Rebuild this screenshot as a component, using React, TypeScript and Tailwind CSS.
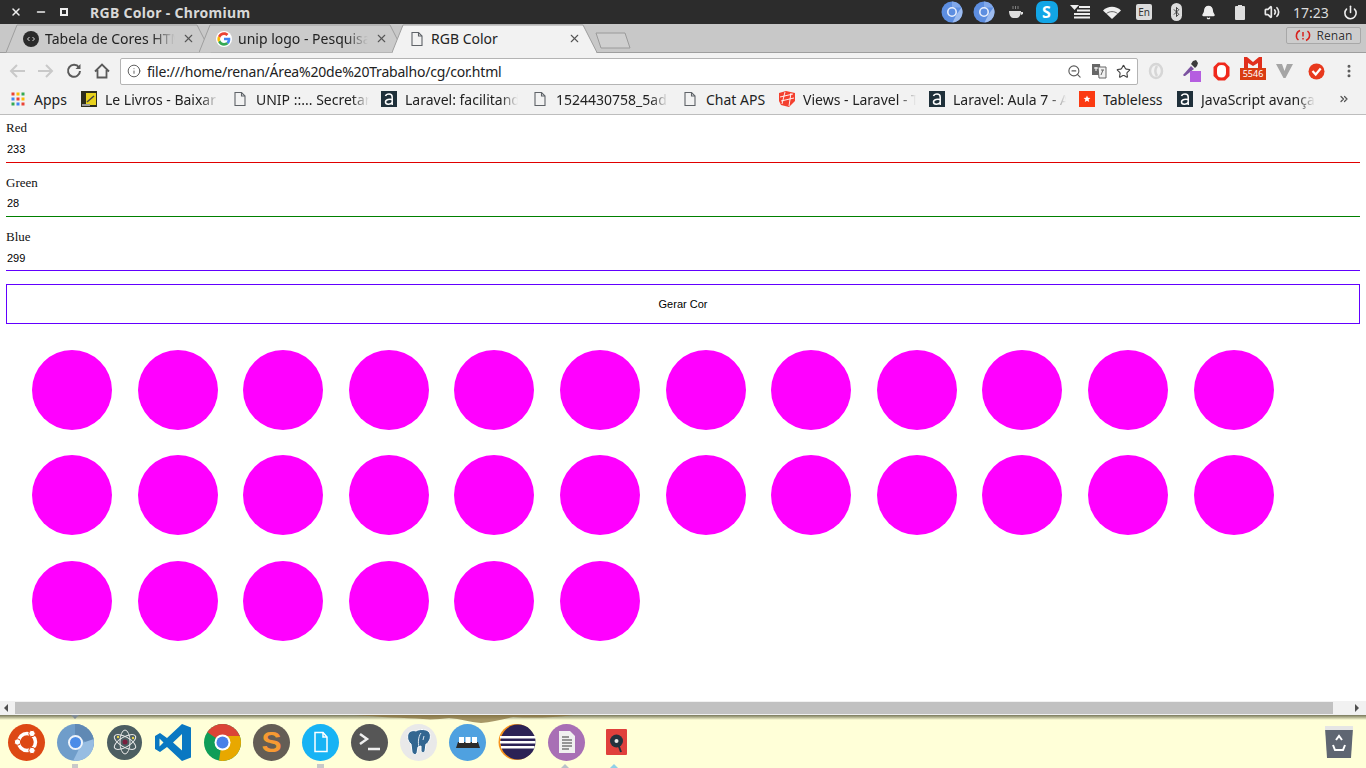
import React from 'react';
import { X, Minus, Bell, Volume2, Power, Bluetooth, Info, ZoomOut, Star, EllipsisVertical, ChevronsRight } from 'lucide-react';

const uiFont = 'font-["Noto_Sans",sans-serif]';

function DocIcon({ size = 16 }: { size?: number }) {
  return (
    <svg width={size} height={size} viewBox="0 0 16 16" fill="none" stroke="#5f6368" strokeWidth="1.1">
      <path d="M3 1.500h6.500L13 5v9.500H3z" />
      <path d="M9.500 1.500V5H13" />
    </svg>
  );
}

function GoogleIcon() {
  return (
    <svg width="16" height="16" viewBox="0 0 48 48">
      <circle cx="24" cy="24" r="24" fill="#fff" />
      <path fill="#4285F4" d="M43 24.500c0-1.400-.1-2.700-.4-4H24v7.600h10.800c-.5 2.500-1.900 4.600-4 6l6.400 5c3.700-3.500 5.800-8.600 5.800-14.600z" />
      <path fill="#34A853" d="M24 44c5.400 0 9.900-1.800 13.200-4.900l-6.400-5c-1.800 1.200-4.100 1.900-6.800 1.900-5.200 0-9.600-3.500-11.200-8.200l-6.600 5.100C9.500 39.500 16.200 44 24 44z" />
      <path fill="#FBBC05" d="M12.800 27.800c-.8-2.500-.8-5.100 0-7.600l-6.600-5.100c-2.800 5.600-2.800 12.200 0 17.800z" />
      <path fill="#EA4335" d="M24 12c2.900 0 5.500 1 7.600 3l5.700-5.700C33.900 6 29.400 4 24 4 16.200 4 9.500 8.500 6.200 15.100l6.600 5.100C14.400 15.500 18.800 12 24 12z" />
    </svg>
  );
}

function CodeFavicon() {
  return (
    <svg width="16" height="16" viewBox="0 0 16 16">
      <circle cx="8" cy="8" r="8" fill="#2b2b2b" />
      <path d="M6.500 6 4.500 8l2 2M9.500 6l2 2-2 2" fill="none" stroke="#ddd" strokeWidth="1" />
    </svg>
  );
}

function TabShape({ active }: { active: boolean }) {
  const fill = active ? '#f2f2f2' : '#cbcbcb';
  return (
    <svg className="absolute left-0 top-0" width="205" height="29" viewBox="0 0 205 29">
      <path d="M0 28.500 11 1h180l14 27.500" fill={fill} stroke="#9e9e9e" strokeWidth="1" />
      {active && <rect x="1" y="27.500" width="203" height="2" fill="#f2f2f2" />}
    </svg>
  );
}

function Tab({ icon, title, active }: { icon: React.ReactNode; title: string; active?: boolean }) {
  return (
    <div className={`relative flex h-[29px] w-[205px] shrink-0 items-center pl-[17px] ${active ? 'z-10' : ''} [&:not(:first-child)]:-ml-3`}>
      <TabShape active={!!active} />
      <div className="relative flex w-[16px] justify-center">{icon}</div>
      <div className={`relative ml-[6px] w-[134px] overflow-hidden whitespace-nowrap text-[14px] text-[#222] ${active ? '' : '[mask-image:linear-gradient(to_right,black_80%,transparent_97%)]'}`}>
        {title}
      </div>
      <X size={13} strokeWidth={2} className="relative ml-[3px] text-[#555]" />
    </div>
  );
}

function ABadge() {
  return (
    <div className="flex h-4 w-4 items-center justify-center bg-[#1f303a]">
      <svg width="10" height="13" viewBox="0 0 10 13" fill="none" stroke="#fff" strokeWidth="1.500">
        <path d="M1.500 3C2 1.500 3.500 1 5 1c2 0 3.200 1 3.200 3v8" />
        <path d="M8.200 6.500C6 6 1.500 6 1.500 9c0 2.800 5 3 6.700 .5" />
      </svg>
    </div>
  );
}

const AppsIcon = () => (
  <svg width="16" height="16" viewBox="0 0 16 16">
    {['#ea4335', '#fbbc05', '#34a853', '#4285f4', '#ea4335', '#fbbc05', '#34a853', '#4285f4', '#ea4335'].map((c, i) => (
      <rect key={i} x={1.500 + (i % 3) * 5} y={1.500 + Math.floor(i / 3) * 5} width="3" height="3" fill={c} />
    ))}
  </svg>
);

const LivrosIcon = () => (
  <svg width="16" height="16" viewBox="0 0 16 16">
    <rect width="16" height="16" fill="#2d2d1c" />
    <rect x="5" y="2" width="10" height="12" fill="#e8d21d" />
    <path d="M6 11l7-6" stroke="#444" strokeWidth="1.500" />
    <rect x="1" y="13" width="8" height="2" fill="#999" />
  </svg>
);

const LaravelIcon = () => (
  <svg width="16" height="16" viewBox="0 0 16 16">
    <path d="M0 2l7-2 9 2v8l-6 6-8-2-2-4z" fill="#f4402f" />
    <path d="M1 6l13-3M3 13 6 1M10 15l2-13M2 10l13-3" stroke="#fff" strokeWidth=".9" fill="none" />
  </svg>
);

const TablelessIcon = () => (
  <svg width="16" height="16" viewBox="0 0 16 16">
    <rect width="16" height="16" fill="#fb3a12" />
    <path d="M8 4.500l1 2.300 2.400.2-1.800 1.600.6 2.400L8 9.700 5.800 11l.6-2.400L4.600 7 7 6.800z" fill="#fff" />
  </svg>
);

const bookmarks = [
  { icon: <AppsIcon />, label: 'Apps', w: 71, textW: 36 },
  { icon: <LivrosIcon />, label: 'Le Livros - Baixar', w: 151, textW: 113, fade: true },
  { icon: <DocIcon />, label: 'UNIP ::... Secretaria', w: 149, textW: 113, fade: true },
  { icon: <ABadge />, label: 'Laravel: facilitando', w: 151, textW: 113, fade: true },
  { icon: <DocIcon />, label: '1524430758_5ad', w: 150, textW: 112, fade: true },
  { icon: <DocIcon />, label: 'Chat APS', w: 97, textW: 66 },
  { icon: <LaravelIcon />, label: 'Views - Laravel - The', w: 150, textW: 113, fade: true },
  { icon: <ABadge />, label: 'Laravel: Aula 7 - A', w: 150, textW: 113, fade: true },
  { icon: <TablelessIcon />, label: 'Tableless', w: 98, textW: 64 },
  { icon: <ABadge />, label: 'JavaScript avançado', w: 150, textW: 114, fade: true },
];

function ChromiumTray() {
  return (
    <svg width="22" height="22" viewBox="0 0 22 22">
      <circle cx="11" cy="11" r="10.500" fill="#5d8ee0" />
      <path d="M11 .5a10.500 10.500 0 0 1 9.500 6H11z" fill="#81a8ea" />
      <path d="M20.500 6.500a10.500 10.500 0 0 1-9 15l4-8z" fill="#9dbcf0" />
      <circle cx="11" cy="11" r="4.200" fill="#5d8ee0" stroke="#e8eefb" strokeWidth="1.600" />
    </svg>
  );
}

function ListTray() {
  return (
    <svg width="20" height="14" viewBox="0 0 20 14" fill="#eee">
      <path d="M0 0h9L4.500 5z" />
      <rect x="9" y="1" width="11" height="2" />
      <rect x="7" y="4.500" width="13" height="2" />
      <rect x="4" y="8" width="16" height="2" />
      <rect x="4" y="11.500" width="16" height="2" />
    </svg>
  );
}

function WifiTray() {
  return (
    <svg width="18" height="13" viewBox="0 0 18 13">
      <path d="M0 4.500C5-.5 13-.5 18 4.500L9 13z" fill="#eee" />
      <path d="M3.500 7.500c3-2.500 8-2.500 11 0" fill="none" stroke="#2c2c2c" strokeWidth=".7" />
    </svg>
  );
}

function TraySlot({ children }: { children: React.ReactNode }) {
  return <div className="flex w-8 shrink-0 items-center justify-center">{children}</div>;
}

function Field({ label, value, line }: { label: string; value: string; line: string }) {
  return (
    <div className="flex flex-col [&:first-child>label]:-translate-y-px [&:last-child>input]:pt-[2px]">
      <label className='h-[15px] font-["Liberation_Serif",serif] text-[13px] leading-[15px] text-[#111]'>{label}</label>
      <input
        readOnly
        value={value}
        className={`h-[27px] w-full border-b pl-px font-["Liberation_Sans",sans-serif] text-[11px] text-black outline-none ${line}`}
      />
    </div>
  );
}

function DockDisc({ bg, children }: { bg: string; children?: React.ReactNode }) {
  return (
    <div className={`flex h-[37px] w-[37px] items-center justify-center overflow-hidden rounded-full ${bg}`}>{children}</div>
  );
}

const dockIcons: React.ReactNode[] = [
  <DockDisc key="ubuntu" bg="bg-[#dd4814]">
    <svg width="30" height="30" viewBox="0 0 30 30" fill="none" stroke="#fff">
      <circle cx="15" cy="15" r="8.500" strokeWidth="3.500" />
      <circle cx="5.500" cy="15" r="3.200" fill="#fff" stroke="#dd4814" />
      <circle cx="20" cy="6.500" r="3.200" fill="#fff" stroke="#dd4814" />
      <circle cx="20" cy="23.500" r="3.200" fill="#fff" stroke="#dd4814" />
    </svg>
  </DockDisc>,
  <DockDisc key="chromium" bg="bg-[#6f9dca]">
    <svg width="37" height="37" viewBox="0 0 37 37">
      <path d="M18 12V0h19v22L25 16z" fill="#6089b4" />
      <path d="M25 19l12-4v22H16z" fill="#97bde2" />
      <circle cx="18.500" cy="18.500" r="6.500" fill="#4a8ce8" stroke="#eef4fb" strokeWidth="2" />
    </svg>
  </DockDisc>,
  <div key="atom" className="flex h-[37px] w-[37px] items-center justify-center">
    <div className="flex h-[35px] w-[35px] items-center justify-center rounded-full bg-[#4c5e62]">
      <svg width="28" height="28" viewBox="0 0 28 28" fill="none" stroke="#e6e6e6" strokeWidth="1">
        <ellipse cx="14" cy="14" rx="12" ry="5" transform="rotate(30 14 14)" />
        <ellipse cx="14" cy="14" rx="12" ry="5" transform="rotate(90 14 14)" />
        <ellipse cx="14" cy="14" rx="12" ry="5" transform="rotate(150 14 14)" />
        <circle cx="14" cy="14" r="2.500" fill="#7a1f3f" stroke="none" />
        <circle cx="7" cy="9" r="1.200" fill="#e8d24a" stroke="none" />
        <circle cx="22" cy="10" r="1.200" fill="#e8d24a" stroke="none" />
      </svg>
    </div>
  </div>,
  <div key="vscode" className="flex h-[37px] w-[37px] items-center justify-center">
    <svg width="37" height="37" viewBox="0 0 37 37">
      <path d="M27 0l9 3.500v30L27 37 12 23l-7 5-5-3V12l5-3 7 5zM27 10l-9 8.500 9 8zM4.500 14.500v8l4-4z" fill="#0a78c2" fillRule="evenodd" />
    </svg>
  </div>,
  <DockDisc key="chrome" bg="bg-[#0f9d58]">
    <svg width="37" height="37" viewBox="0 0 37 37">
      <path d="M18.500 18.500 3 8V0h34v12H18.500z" fill="#db4437" />
      <path d="M18.500 12H37v25H15z" fill="#e8a800" />
      <circle cx="18.500" cy="18.500" r="8" fill="#fff" />
      <circle cx="18.500" cy="18.500" r="6" fill="#4a80e8" />
    </svg>
  </DockDisc>,
  <DockDisc key="sublime" bg="bg-[#645d55]">
    <span className='font-["Liberation_Sans",sans-serif] text-[30px] font-bold leading-none text-[#f79a32]'>S</span>
  </DockDisc>,
  <DockDisc key="files" bg="bg-[#17b3f4]">
    <svg width="18" height="22" viewBox="0 0 18 22" fill="none" stroke="#fff" strokeWidth="1.500">
      <path d="M3 1.500h8l4 4.500v14.500H3z" />
      <path d="M11 1.500V6h4" />
    </svg>
  </DockDisc>,
  <DockDisc key="terminal" bg="bg-[#565656]">
    <svg width="24" height="22" viewBox="0 0 24 22" fill="none" stroke="#eee" strokeWidth="2.500">
      <path d="M2 3l7 5-7 5" />
      <path d="M10 18h12" />
    </svg>
  </DockDisc>,
  <DockDisc key="postgres" bg="bg-[#e9e9e9]">
    <svg width="28" height="28" viewBox="0 0 28 28">
      <path d="M3 6c1-3 5-4 8-3 3-2 9-2 12 0 3 2 3 7 1 10-1 2-2 3-3 3l-1 7c-1 2-3 2-4 0v-5l-3 1-1 6c-2 3-4 1-5-1l-1-8C3 14 2 10 3 6z" fill="#336791" stroke="#fff" strokeWidth="1" />
      <path d="M16 5c-3 4-3 10-2 14M19 8l-1 4" stroke="#dfe9f2" strokeWidth="1" fill="none" />
    </svg>
  </DockDisc>,
  <DockDisc key="dots" bg="bg-[#4fa1e0]">
    <svg width="24" height="12" viewBox="0 0 24 12">
      <path d="M2 6h20l2 6H0z" fill="#2b2b2b" />
      <rect x="3" y="1" width="5" height="6" fill="#fff" />
      <rect x="9.500" y="1" width="5" height="6" fill="#fff" />
      <rect x="16" y="1" width="5" height="6" fill="#fff" />
    </svg>
  </DockDisc>,
  <div key="eclipse" className="flex h-[37px] w-[38px] items-center justify-center">
    <svg width="38" height="38" viewBox="0 0 38 38">
      <circle cx="18.500" cy="19" r="18" fill="#f7941e" />
      <circle cx="20" cy="19" r="17.500" fill="#2c2255" />
      <rect x="2" y="13" width="35.500" height="2.500" fill="#fff" />
      <rect x="2" y="18" width="35.500" height="2.500" fill="#fff" />
      <rect x="3" y="23" width="33.500" height="2.500" fill="#fff" />
    </svg>
  </div>,
  <DockDisc key="notes" bg="bg-[#a86fb5]">
    <svg width="20" height="24" viewBox="0 0 20 24">
      <path d="M2 1h11l5 5v17H2z" fill="#f0f0f0" />
      <path d="M5 7h7M5 10h10M5 13h10M5 16h10M5 19h7" stroke="#777" strokeWidth="1.500" />
    </svg>
  </DockDisc>,
  <div key="book" className="ml-[1px] flex h-[37px] w-[37px] items-center justify-center">
    <svg width="21" height="26" viewBox="0 0 21 26">
      <rect width="21" height="26" rx="1" fill="#e0403c" />
      <circle cx="10.500" cy="12" r="6.500" fill="#23323d" />
      <circle cx="10.500" cy="12" r="2" fill="#e8e8e8" />
      <path d="M12 15l3 8" stroke="#23323d" strokeWidth="2" />
    </svg>
  </div>,
];

export default function App() {
  const circles = Array.from({ length: 30 });

  return (
    <div className={`flex h-screen w-full flex-col overflow-hidden bg-white ${uiFont}`}>
      {/* Ubuntu top panel */}
      <div className="flex h-6 shrink-0 items-center bg-[#2c2c2c] text-[#dfdfdf]">
        <X size={12} strokeWidth={3} className="ml-[10px] text-[#eee]" />
        <Minus size={12} strokeWidth={3} className="ml-[13px] text-[#eee]" />
        <div className="ml-[13px] h-2 w-2 border-2 border-[#eee]" />
        <span className="ml-[22px] text-[14px] font-bold tracking-[0.3px] text-[#d8d8d8]">RGB Color - Chromium</span>
        <div className="ml-auto flex items-center">
          <TraySlot><ChromiumTray /></TraySlot>
          <TraySlot><ChromiumTray /></TraySlot>
          <TraySlot>
            <svg width="16" height="16" viewBox="0 0 16 16" fill="#ddd">
              <path d="M1 7h12c0 4-2 7-4 7H5c-2 0-4-3-4-7zM13 8h2v2l-2 1z" />
              <path d="M5 5V2M7.500 5V2M10 5V2" stroke="#999" strokeWidth=".8" />
            </svg>
          </TraySlot>
          <TraySlot>
            <div className="-ml-[3px] flex h-[22px] w-[22px] items-center justify-center rounded-[7px] bg-[#12a5e6] text-[16px] font-bold leading-none text-white">S</div>
          </TraySlot>
          <TraySlot><ListTray /></TraySlot>
          <TraySlot><WifiTray /></TraySlot>
          <TraySlot>
            <div className="flex h-[16px] w-[16px] items-center justify-center rounded-[2px] bg-[#dcdcdc] text-[10px] leading-none text-[#333]">En</div>
          </TraySlot>
          <TraySlot>
            <div className="flex h-[18px] w-[11px] items-center justify-center rounded-full bg-[#dcdcdc]">
              <Bluetooth size={12} strokeWidth={2} className="text-[#333]" />
            </div>
          </TraySlot>
          <TraySlot><Bell size={15} fill="#eee" className="text-[#eee]" /></TraySlot>
          <TraySlot>
            <div className="flex flex-col items-center">
              <div className="h-px w-[4px] bg-[#ddd]" />
              <div className="h-[14px] w-[10px] rounded-[1px] bg-[#dedede]" />
            </div>
          </TraySlot>
          <TraySlot><Volume2 size={16} strokeWidth={2.500} className="text-[#e8e8e8]" /></TraySlot>
          <span className="ml-[5px] w-[38px] text-[14px] text-[#dcdcdc]">17:23</span>
          <Power size={15} strokeWidth={2.500} className="ml-[12px] mr-[8px] text-[#eee]" />
        </div>
      </div>

      {/* Tab strip */}
      <div className="relative flex h-[29px] shrink-0 bg-[#c8c8c8]">
        <div className="absolute bottom-0 left-0 h-px w-full bg-[#9e9e9e]" />
        <div className="relative flex pl-[6px]">
          <Tab icon={<CodeFavicon />} title="Tabela de Cores HTML" />
          <Tab icon={<GoogleIcon />} title="unip logo - Pesquisa Google" />
          <Tab icon={<DocIcon />} title="RGB Color" active />
          <svg className="ml-[-2px] mt-[8px] shrink-0" width="36" height="17" viewBox="0 0 36 17">
            <path d="M1 1h29l5 15H6z" fill="#cfcfcf" stroke="#9a9a9a" />
          </svg>
        </div>
        <div className="absolute right-[5px] top-[3px] flex h-[17px] w-[75px] items-center justify-center gap-[6px] rounded-[2px] border border-[#a8a8a8] bg-[#cdcdcd] text-[12px] leading-none text-[#333] [text-shadow:0_0_1px_#fff]">
          <svg width="16" height="13" viewBox="0 0 16 13" fill="none" stroke="#d8201c" strokeWidth="1.500">
            <path d="M5 1.500A5.500 5.500 0 0 0 3.500 11M11 11.500A5.500 5.500 0 0 0 12.500 2" />
            <path d="M8 3v4.500M8 9v1.500" />
          </svg>
          Renan
        </div>
      </div>

      {/* Toolbar */}
      <div className="flex h-[33px] shrink-0 items-center bg-[#f2f2f2] pt-[3px]">
        <svg className="ml-[9px]" width="17" height="16" viewBox="0 0 17 16" fill="none" stroke="#c9c9c9" strokeWidth="2">
          <path d="M16 8H2M8 2 2 8l6 6" />
        </svg>
        <svg className="ml-[11px]" width="17" height="16" viewBox="0 0 17 16" fill="none" stroke="#c9c9c9" strokeWidth="2">
          <path d="M1 8h14M9 2l6 6-6 6" />
        </svg>
        <svg className="ml-[12px]" width="16" height="16" viewBox="0 0 16 16" fill="none" stroke="#5a5a5a" strokeWidth="2">
          <path d="M13 4.500A6 6 0 1 0 14 8" />
          <path d="M14.500 1v5h-5" fill="#5a5a5a" stroke="none" />
        </svg>
        <svg className="ml-[12px]" width="16" height="16" viewBox="0 0 16 16" fill="none" stroke="#5a5a5a" strokeWidth="1.800">
          <path d="M1 8.500 8 1.500l7 7M3.500 7v7.500h9V7" />
        </svg>
        <div className="ml-[10px] flex h-[27px] w-[1018px] items-center rounded-[2px] border border-[#b4b4b4] bg-white">
          <Info size={14} strokeWidth={1.600} className="ml-[6px] text-[#555]" />
          <span className="ml-[6px] text-[14px] tracking-[-0.2px] text-[#222]">file:///home/renan/Área%20de%20Trabalho/cg/cor.html</span>
          <div className="ml-auto flex items-center">
            <ZoomOut size={15} strokeWidth={1.800} className="text-[#5a5a5a]" />
            <svg className="ml-[9px]" width="16" height="16" viewBox="0 0 16 16">
              <path d="M1 1h8l1 11H1z" fill="#666" />
              <path d="M7 4h8v11H8z" fill="#f0f0f0" stroke="#666" />
              <path d="M3 5h4M5 4v4" stroke="#fff" />
              <path d="M10 7h3M12 7l-2 5" stroke="#666" />
            </svg>
            <Star size={15} strokeWidth={1.800} className="ml-[9px] mr-[6px] text-[#444]" />
          </div>
        </div>
        <svg className="ml-[10px]" width="16" height="18" viewBox="0 0 16 18" fill="none" stroke="#d6d6d6" strokeWidth="2.500">
          <ellipse cx="8" cy="9" rx="6" ry="7" />
          <path d="M9 4c-2 3-2 7 0 10" />
        </svg>
        <div className="relative ml-[18px] h-[20px] w-[16px] -translate-y-[2px]">
          <svg width="18" height="18" viewBox="0 0 18 18">
            <path d="M2 17 1 16l8-9 3 3-9 7z" fill="#7b52a0" />
            <path d="M9 5l4 4 2-2 1-3-2-3-3 1z" fill="#3c3c3c" />
          </svg>
          <div className="absolute left-[8px] top-[12px] h-[11px] w-[11px] bg-[#b55ee0]" />
        </div>
        <svg className="ml-[15px]" width="17" height="19" viewBox="0 0 17 19">
          <path d="M5 .5h7L16.500 5v9L12 18.500H5L.5 14V5z" fill="#f0291c" />
          <path d="M4 7.500c0-3 1.500-4.500 4.500-4.500S13 4.500 13 7v4c0 2.500-1.500 4.500-4.500 4.500S4 14 4 11z" fill="#fff" />
        </svg>
        <div className="relative ml-[10px] flex h-[24px] w-[26px] -translate-y-[2px] flex-col items-center">
          <svg width="18" height="11" viewBox="0 0 18 11">
            <path d="M0 0h3l6 5 6-5h3v11h-4V6L9 9 4 6v5H0z" fill="#e12e1c" />
          </svg>
          <div className="absolute top-[11px] w-[26px] bg-[#d93c12] text-center text-[9px] leading-[12px] text-white">5546</div>
        </div>
        <svg className="ml-[10px]" width="17" height="16" viewBox="0 0 17 16">
          <path d="M0 1h6l2.500 7L11 1h6L9.500 15h-2z" fill="#a5a5a5" />
        </svg>
        <svg className="ml-[15px]" width="17" height="17" viewBox="0 0 17 17">
          <circle cx="8.500" cy="8.500" r="8" fill="#e8391d" />
          <path d="M4.500 8l3.200 3.500 5-6" fill="none" stroke="#fff" strokeWidth="2.200" />
        </svg>
        <EllipsisVertical size={16} strokeWidth={2.500} className="ml-[16px] text-[#5a5a5a]" />
      </div>

      {/* Bookmarks bar */}
      <div className="flex h-[29px] shrink-0 items-center border-b border-[#bdbdbd] bg-[#f2f2f2] pb-[2px] pl-[10px]">
        {bookmarks.map((b) => (
          <div key={b.label} className="flex shrink-0 items-center" style={{ width: b.w }}>
            <div className="flex w-4 justify-center">{b.icon}</div>
            <span
              className={`ml-[8px] overflow-hidden whitespace-nowrap text-[14px] text-[#222] ${b.fade ? '[mask-image:linear-gradient(to_right,black_85%,transparent)]' : ''}`}
              style={{ width: b.textW }}
            >
              {b.label}
            </span>
          </div>
        ))}
        <ChevronsRight size={12} strokeWidth={2.500} className="ml-[11px] text-[#555]" />
      </div>

      {/* Page */}
      <div className="min-h-0 flex-1 overflow-hidden px-[6px] pt-[6px]">
        <div className="flex flex-col gap-[12px]">
          <Field label="Red" value="233" line="border-[#e00000]" />
          <Field label="Green" value="28" line="border-[#008000]" />
          <Field label="Blue" value="299" line="border-[#6200ff]" />
        </div>
        <button className='mt-[13px] h-[40px] w-full border border-[#6200ff] font-["Liberation_Sans",sans-serif] text-[11px] text-black'>
          Gerar Cor
        </button>
        <div className="ml-[26px] mt-[26px] grid grid-cols-[repeat(12,80px)] gap-x-[25.6px] gap-y-[25.4px]">
          {circles.map((_, i) => (
            <div key={i} className="h-20 w-20 rounded-full bg-[#ff00ff]" />
          ))}
        </div>
      </div>

      {/* Horizontal scrollbar */}
      <div className="flex h-[14px] shrink-0 items-center bg-[#f1f1f1]">
        <div className="ml-[4px] h-0 w-0 border-y-[4px] border-r-[4px] border-y-transparent border-r-[#505050]" />
        <div className="ml-[7px] h-[12px] w-[1318px] bg-[#c1c1c1]" />
        <div className="ml-[22px] h-0 w-0 border-y-[4px] border-l-[4px] border-y-transparent border-l-[#505050]" />
      </div>

      {/* Dock */}
      <div className="relative flex h-[53px] shrink-0 items-center bg-[#ffffd8] pl-[8px] pr-[13px]">
        <div className="absolute left-0 top-0 h-[5px] w-full bg-gradient-to-b from-[#77775a] to-[#ffffd8]" />
        {/* wallpaper showing through the dock */}
        <svg className="absolute left-[350px] top-0" width="230" height="9" viewBox="0 0 230 9">
          <path d="M5 0h218c-20 3-45 3-60 2-12 3-22 5-32 6-12-1-20-4-32-5-8 1-18 2-26 1C55 3 30 2 5 0z" fill="#8a7442" opacity=".75" />
        </svg>
        <div className="absolute left-[71px] top-0 h-0 w-0 border-x-[4px] border-t-[4px] border-x-transparent border-t-[#7f8a95]" />
        <div className="absolute bottom-0 left-[72px] h-[4px] w-[6px] bg-[#c9c9c9]" />
        <div className="absolute bottom-0 left-[317px] h-[4px] w-[7px] bg-[#c9c9c9]" />
        <div className="absolute bottom-0 left-[561px] h-0 w-0 border-x-[4px] border-b-[4px] border-x-transparent border-b-[#b9c2c9]" />
        <div className="absolute bottom-0 left-[610px] h-0 w-0 border-x-[4px] border-b-[4px] border-x-transparent border-b-[#8fd0e8]" />
        <div className="relative mt-[1px] flex items-center gap-[12px]">{dockIcons}</div>
        <svg className="relative ml-auto mt-[1px]" width="28" height="34" viewBox="0 0 28 34">
          <path d="M0 3h28l-2 30H2z" fill="#5f6672" />
          <rect width="28" height="4" y="1" fill="#e5e5e5" />
          <path d="M11 15l3-4 3 4M20 20l-2 5h-5M8 20l2 5h3" fill="none" stroke="#fff" strokeWidth="2" />
        </svg>
      </div>
    </div>
  );
}
